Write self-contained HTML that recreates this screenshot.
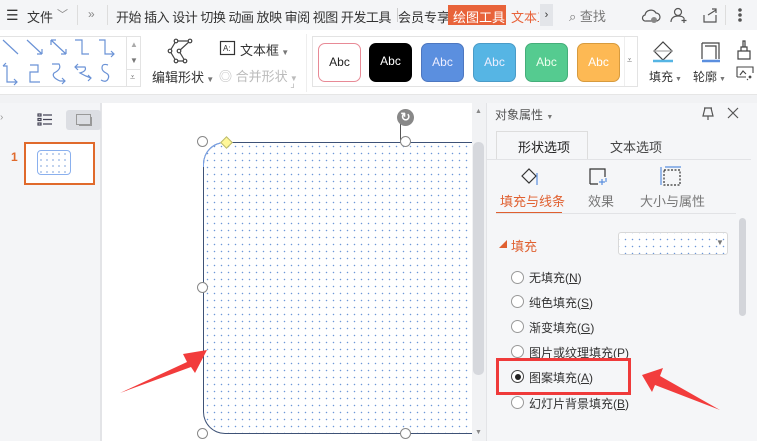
<!DOCTYPE html>
<html><head><meta charset="utf-8"><style>
*{margin:0;padding:0;box-sizing:border-box}
body{width:757px;height:441px;overflow:hidden;position:relative;background:#fff;font-family:"Liberation Sans","Noto Sans CJK SC",sans-serif;color:#333;font-size:12px}
.a{position:absolute}
.t{position:absolute;white-space:nowrap}
.dots{background-image:radial-gradient(circle,#6d97d8 0.6px,transparent 0.9px);background-size:7px 7px}
.abc{position:absolute;top:43px;width:43px;height:39px;border-radius:7px;font-size:12px;text-align:center;line-height:37px}
.radio{position:absolute;width:13px;height:13px;border:1px solid #999;border-radius:50%;background:#fff}
.h{position:absolute;width:11px;height:11px;border:1px solid #888;border-radius:50%;background:#fff}
</style></head><body>
<div class="a" style="left:0;top:0;width:757px;height:30px;background:#f4f5f7"></div>
<div class="t" style="left:6px;top:7px;font-size:14px">☰</div>
<div class="t" style="left:27px;top:7px;font-size:13px">文件</div>
<div class="t" style="left:57px;top:6px;font-size:11px;color:#888">﹀</div>
<div class="a" style="left:77px;top:5px;width:1px;height:20px;background:#ddd"></div>
<div class="t" style="left:88px;top:7px;font-size:12px;color:#888">»</div>
<div class="a" style="left:107px;top:5px;width:1px;height:20px;background:#ddd"></div>
<div class="t" style="left:116px;top:7px;font-size:13px;letter-spacing:-0.5px">开始 插入 设计 切换 动画 放映 审阅 视图 开发工具</div>
<div class="a" style="left:397px;top:8px;width:1px;height:14px;background:#ccc"></div>
<div class="t" style="left:398px;top:7px;font-size:13px">会员专享</div>
<div class="a" style="left:448px;top:5px;width:58px;height:20px;background:#e8633a"></div>
<div class="t" style="left:453px;top:7px;font-size:13px;color:#fff">绘图工具</div>
<div class="t" style="left:511px;top:7px;font-size:13px;color:#e8633a;width:28px;overflow:hidden">文本工</div>
<div class="a" style="left:540px;top:4px;width:13px;height:22px;background:#e3e5e9;font-size:11px;text-align:center;line-height:22px">›</div>
<div class="t" style="left:569px;top:6px;font-size:13px;color:#777">⌕ 查找</div>
<svg class="a" style="left:640px;top:5px" width="110" height="20" viewBox="0 0 110 20" fill="none" stroke="#555" stroke-width="1.2">
<path d="M6 16h10a4 4 0 0 0 0-8a6 6 0 0 0-11 2a3 3 0 0 0 1 6z"/><circle cx="14" cy="15" r="3" fill="#888" stroke="none"/>
<circle cx="38" cy="7" r="3.5"/><path d="M31 17c0-4 3-6 7-6s5 1 6 2M44 13v5M41.5 15.5h5"/>
<path d="M64 10v7h12v-7M68 10l8-5M72 4h4v4"/>
<circle cx="100" cy="5" r="1.2" fill="#555"/><circle cx="100" cy="10" r="1.2" fill="#555"/><circle cx="100" cy="15" r="1.2" fill="#555"/>
</svg>
<div class="a" style="left:725px;top:5px;width:1px;height:20px;background:#ddd"></div>

<div class="a" style="left:0;top:36px;width:141px;height:51px;border:1px solid #e3e3e3;border-left:none;background:#fff"></div>
<svg class="a" style="left:0;top:37px" width="127" height="50" viewBox="0 0 127 50" fill="none" stroke="#6a92d6" stroke-width="1.2">
<path d="M3 3l15 14"/><path d="M27 3l15 14M42 17v-5M42 17h-5"/>
<path d="M51 3l15 14M51 3h5M51 3v5M66 17h-5M66 17v-5"/>
<path d="M75 3h7v14h7"/><path d="M99 3h6v14h9M111 14l3 3-3 3"/>
<path d="M3 29h4v16h10M14 42l3 3-3 3M3 29l3-3"/>
<path d="M30 28h8v7h-8v10h10"/><path d="M52 27h7q3 5-5 9q-3 4 6 8h5M62 41l3 3-3 3"/>
<path d="M78 27l-3 3 3 3M75 30h10q2 4-5 6 5 3 11 5M88 38l3 3-3 3"/>
<path d="M108 28q-6-2-6 3q0 3 4 5q4 2 2 6q-2 4-7 1"/>
</svg>
<div class="a" style="left:126px;top:37px;width:1px;height:50px;background:#e3e3e3"></div>
<div class="a" style="left:126px;top:69px;width:15px;height:1px;background:#e3e3e3"></div>
<div class="t" style="left:130px;top:40px;font-size:8px;color:#aaa">▲</div>
<div class="t" style="left:130px;top:56px;font-size:8px;color:#777">▼</div>
<div class="t" style="left:130px;top:72px;font-size:9px;color:#777">⩡</div>
<svg class="a" style="left:167px;top:38px" width="28" height="26" viewBox="0 0 28 26" fill="none" stroke="#444" stroke-width="1.2">
<path d="M9 3h14l-11 10 6 10H9l-6-10z"/><circle cx="9" cy="3" r="1.8" fill="#fff"/><circle cx="23" cy="3" r="1.8" fill="#fff"/><circle cx="3" cy="13" r="1.8" fill="#fff"/><circle cx="12" cy="13" r="1.8" fill="#fff"/><circle cx="9" cy="23" r="1.8" fill="#fff"/><circle cx="18" cy="23" r="1.8" fill="#fff"/>
</svg>
<div class="t" style="left:152px;top:67px;font-size:13px">编辑形状<span style="font-size:8px;color:#777"> ▼</span></div>
<svg class="a" style="left:219px;top:40px" width="17" height="16" viewBox="0 0 17 16" fill="none" stroke="#333" stroke-width="1.2"><rect x="1.5" y="1.5" width="14" height="13"/><text x="4" y="11" font-size="8" fill="#333" stroke="none" font-family="Liberation Sans">A:</text></svg>
<div class="t" style="left:240px;top:40px;font-size:13px">文本框<span style="font-size:8px;color:#777"> ▼</span></div>
<div class="t" style="left:219px;top:66px;font-size:13px;color:#bbb">◎ 合并形状<span style="font-size:8px"> ▼</span></div>
<div class="t" style="left:291px;top:85px;font-size:7px;color:#999">┘</div>
<div class="a" style="left:306px;top:34px;width:1px;height:58px;background:#eee"></div>
<div class="a" style="left:312px;top:36px;width:326px;height:51px;border:1px solid #e3e3e3;background:#fff"></div>
<div class="abc" style="left:318px;border:1.5px solid #e88a96;background:#fff;color:#222">Abc</div>
<div class="abc" style="left:369px;background:#000;color:#fff">Abc</div>
<div class="abc" style="left:421px;background:#5b8fdf;border:1px solid #4d77c0;color:#eef">Abc</div>
<div class="abc" style="left:473px;background:#56b5e4;border:1px solid #4a9bc7;color:#eef">Abc</div>
<div class="abc" style="left:525px;background:#55cb90;border:1px solid #45ae7a;color:#efe">Abc</div>
<div class="abc" style="left:577px;background:#fdb954;border:1px solid #d79b3e;color:#fff">Abc</div>
<div class="a" style="left:624px;top:37px;width:1px;height:49px;background:#eee"></div>
<div class="t" style="left:627px;top:55px;font-size:9px;color:#777">⩡</div>
<svg class="a" style="left:650px;top:39px" width="110" height="24" viewBox="0 0 110 24" fill="none" stroke="#444" stroke-width="1.2">
<path d="M4 12l9-9 9 9-9 9z"/><path d="M4 12l18 0" stroke="#aaa"/><path d="M3 22h20" stroke="#56b5e4" stroke-width="2.5"/>
<path d="M52 4h17v16M55 7h11v13M52 4v16" /><path d="M52 22h18" stroke="#5b8fdf" stroke-width="2.5"/>
<path d="M88 12h12v8H88zM91 12V8h6v4M93 8V2h2v6"/>
</svg>
<div class="t" style="left:649px;top:68px;font-size:12px">填充<span style="font-size:7px;color:#777"> ▼</span></div>
<div class="t" style="left:693px;top:68px;font-size:12px">轮廓<span style="font-size:7px;color:#777"> ▼</span></div>
<svg class="a" style="left:736px;top:65px" width="18" height="16" viewBox="0 0 18 16" fill="none" stroke="#444" stroke-width="1.1"><path d="M1 12V2h16v6M1 12h9M4 10l3-4 3 3"/><path d="M14 11l1 1-1 1-1-1zM11 14l1 1"/></svg>
<div class="a" style="left:0;top:94px;width:757px;height:9px;background:#f1f2f4;border-top:1px solid #e6e6e6"></div>

<div class="a" style="left:0;top:103px;width:102px;height:338px;background:#f4f5f7;border-right:2px solid #e3e4e7"></div>
<div class="t" style="left:0;top:112px;font-size:10px;color:#999">›</div>
<svg class="a" style="left:37px;top:113px" width="16" height="13" viewBox="0 0 16 13" fill="none" stroke="#445" stroke-width="1.2"><rect x="1" y="1" width="3" height="2"/><rect x="1" y="5.5" width="3" height="2"/><rect x="1" y="10" width="3" height="2"/><path d="M6 2h9M6 6.5h9M6 11h9"/></svg>
<div class="a" style="left:66px;top:110px;width:35px;height:20px;background:#dcdee3;border-radius:3px"></div>
<div class="a" style="left:76px;top:114px;width:15px;height:11px;border:1px solid #999;background:#dcdee3;box-shadow:2px 2px 0 -1px #999"></div>
<div class="t" style="left:11px;top:150px;font-size:12px;color:#e06a2c;font-weight:bold">1</div>
<div class="a" style="left:24px;top:142px;width:71px;height:43px;border:2px solid #e06a2c;background:#fff"></div>
<div class="a dots" style="left:37px;top:150px;width:34px;height:25px;border:1.5px solid #8ab0ee;border-radius:4px;background-size:6px 6px"></div>

<div class="a dots" style="left:203px;top:142px;width:269px;height:292px;border-left:1.3px solid #3e5276;border-top:1.3px solid #3e5276;border-bottom:1.3px solid #3e5276;border-radius:22px 0 0 22px"></div>
<div class="a" style="left:203px;top:142px;width:25px;height:25px;border-left:1px solid #7aa3ea;border-top:1px solid #7aa3ea;border-radius:22px 0 0 0"></div>
<div class="a" style="left:400px;top:120px;width:1px;height:22px;background:#555"></div>
<div class="a" style="left:397px;top:109px;width:17px;height:17px;border-radius:50%;background:#888;color:#fff;font-size:12px;text-align:center;line-height:17px;font-weight:bold">↻</div>
<div class="h" style="left:197px;top:136px"></div>
<div class="h" style="left:400px;top:136px"></div>
<div class="h" style="left:197px;top:282px"></div>
<div class="h" style="left:197px;top:428px"></div>
<div class="h" style="left:400px;top:428px"></div>
<div class="a" style="left:222px;top:138px;width:9px;height:9px;background:#fff799;border:1px solid #bbb86a;transform:rotate(45deg)"></div>
<svg class="a" style="left:115px;top:340px" width="95" height="60" viewBox="0 0 95 60"><polygon points="5,53 72,22 68,14 92,10 80,33 76,27" fill="#f23c3c"/></svg>
<div class="a" style="left:472px;top:103px;width:14px;height:338px;background:#f1f2f4"></div>
<div class="t" style="left:475px;top:108px;font-size:7px;color:#888">▲</div>
<div class="a" style="left:473px;top:142px;width:11px;height:233px;background:#d6d8dd;border-radius:5px"></div>
<div class="t" style="left:475px;top:429px;font-size:7px;color:#888">▼</div>

<div class="a" style="left:486px;top:103px;width:271px;height:338px;background:#f5f6f8;border-left:1px solid #e3e4e7"></div>
<div class="t" style="left:495px;top:106px;font-size:12px;color:#555">对象属性 <span style="font-size:7px;color:#777">▼</span></div>
<svg class="a" style="left:700px;top:106px" width="42" height="15" viewBox="0 0 42 15" fill="none" stroke="#555" stroke-width="1.2"><path d="M4 2h8M5 2l-2 8h10l-2-8M8 10v4"/><path d="M28 2l10 10M38 2L28 12"/></svg>
<div class="a" style="left:496px;top:131px;width:92px;height:29px;border:1px solid #ddd;border-bottom:none;background:#f5f6f8"></div>
<div class="a" style="left:486px;top:159px;width:265px;height:1px;background:#e2e3e6"></div>
<div class="t" style="left:518px;top:137px;font-size:13px;color:#222">形状选项</div>
<div class="t" style="left:610px;top:137px;font-size:13px;color:#444">文本选项</div>
<svg class="a" style="left:519px;top:165px" width="150" height="22" viewBox="0 0 150 22" fill="none" stroke="#333" stroke-width="1.2">
<path d="M3 11l7-7 7 7-7 7z"/><path d="M18 8v12" stroke="#5b8fdf"/>
<path d="M71 19V4h15v8M71 19h8" /><path d="M83 14v6M80 17h6M87 13v4" stroke="#5b8fdf"/>
</svg>
<svg class="a" style="left:660px;top:165px" width="25" height="22" viewBox="0 0 25 22" fill="none" stroke-width="1.2"><path d="M1 2v18M5 2h16" stroke="#5b8fdf"/><rect x="4" y="5" width="16" height="15" stroke="#333" stroke-dasharray="2 1.5"/></svg>
<div class="t" style="left:500px;top:191px;font-size:13px;color:#e06030">填充与线条</div>
<div class="t" style="left:588px;top:191px;font-size:13px;color:#777">效果</div>
<div class="t" style="left:640px;top:191px;font-size:13px;color:#777">大小与属性</div>
<div class="a" style="left:496px;top:212px;width:66px;height:2px;background:#e06030"></div>
<div class="a" style="left:496px;top:213px;width:240px;height:1px;background:#e2e3e6"></div>
<div class="a" style="left:739px;top:218px;width:7px;height:98px;background:#d3d5da;border-radius:4px"></div>
<div class="t" style="left:499px;top:239px;font-size:8px;color:#e06030">◢</div>
<div class="t" style="left:511px;top:236px;font-size:13px;color:#e06030">填充</div>
<div class="a dots" style="left:618px;top:232px;width:110px;height:23px;border:1px solid #d8d8d8;border-radius:3px;background-color:#fff;background-position:3px 3px"></div>
<div class="t" style="left:716px;top:238px;font-size:8px;color:#777">▼</div>
<div class="radio" style="left:511px;top:271px"></div><div class="t" style="left:529px;top:269px;font-size:12px">无填充(<u>N</u>)</div>
<div class="radio" style="left:511px;top:295px"></div><div class="t" style="left:529px;top:294px;font-size:12px">纯色填充(<u>S</u>)</div>
<div class="radio" style="left:511px;top:320px"></div><div class="t" style="left:529px;top:319px;font-size:12px">渐变填充(<u>G</u>)</div>
<div class="radio" style="left:511px;top:345px"></div><div class="t" style="left:529px;top:344px;font-size:12px">图片或纹理填充(<u>P</u>)</div>
<div class="a" style="left:496px;top:358px;width:135px;height:37px;border:3px solid #ef3a3a;background:#f5f6f8"></div>
<div class="radio" style="left:511px;top:370px;border-color:#444"></div><div class="a" style="left:514.5px;top:373.5px;width:6px;height:6px;border-radius:50%;background:#222"></div>
<div class="t" style="left:529px;top:369px;font-size:12px">图案填充(<u>A</u>)</div>
<div class="radio" style="left:511px;top:396px"></div><div class="t" style="left:529px;top:395px;font-size:12px">幻灯片背景填充(<u>B</u>)</div>
<svg class="a" style="left:638px;top:368px" width="85" height="45" viewBox="0 0 85 45"><polygon points="4,7 25,0 22,8 82,42 17,17 14,24" fill="#f23c3c"/></svg>
</body></html>
